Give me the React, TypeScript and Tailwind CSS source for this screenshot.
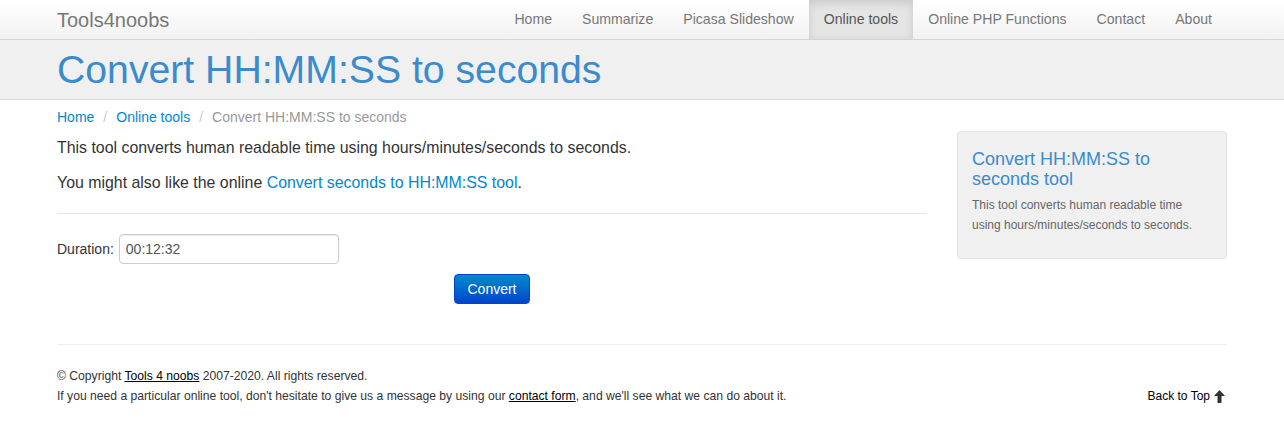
export default function App() {
  const navItems = ["Home", "Summarize", "Picasa Slideshow", "Online tools", "Online PHP Functions", "Contact", "About"];

  return (
    <div className="min-h-screen bg-white text-[#333] text-[14px]" style={{ fontFamily: '"Liberation Sans", Arial, sans-serif' }}>
      {/* Navbar */}
      <div className="h-[40px] bg-gradient-to-b from-white to-[#f2f2f2] border-b border-[#d4d4d4] shadow-[0_1px_4px_rgba(0,0,0,0.065)]">
        <div className="w-[1170px] mx-auto flex items-center justify-between h-full">
          <a className="text-[20px] text-[#777] leading-[20px]">Tools4noobs</a>
          <ul className="flex h-full text-[14.1px]">
            {navItems.map((item) => (
              <li
                key={item}
                className={
                  item === "Online tools"
                    ? "px-[15px] flex items-center h-full bg-[#e5e5e5] text-[#555] shadow-[inset_0_3px_8px_rgba(0,0,0,0.125)]"
                    : "px-[15px] flex items-center h-full text-[#777]"
                }
              >
                {item}
              </li>
            ))}
          </ul>
        </div>
      </div>

      {/* Page header */}
      <div className="h-[60px] bg-[#f0f0f0] border-b border-[#dcdcdc]">
        <div className="w-[1170px] mx-auto h-full flex items-center">
          <h1 className="text-[39.2px] leading-[40px] text-[#3a8bcd] pt-[1px]">Convert HH:MM:SS to seconds</h1>
        </div>
      </div>

      <div className="w-[1170px] mx-auto">
        {/* Breadcrumb */}
        <ul className="flex items-center pt-[7px] leading-[20px]">
          <li className="text-[#0088cc]">Home</li>
          <li className="px-[9px] text-[#ccc]">/</li>
          <li className="text-[#0088cc]">Online tools</li>
          <li className="px-[9px] text-[#ccc]">/</li>
          <li className="text-[#999]">Convert HH:MM:SS to seconds</li>
        </ul>

        <div className="flex gap-[30px] mt-[4px]">
          {/* Main */}
          <div className="w-[870px] pt-[4px]">
            <p className="text-[15.9px] leading-[25px] mb-[10px]">
              This tool converts human readable time using hours/minutes/seconds to seconds.
            </p>
            <p className="text-[15.9px] leading-[25px]">
              You might also like the online <a className="text-[#0088cc]">Convert seconds to HH:MM:SS tool</a>.
            </p>
            <hr className="mt-[18px] mb-[20px] border-0 border-t border-[#e5e5e5]" />
            <div className="flex items-center">
              <label className="mr-[5px]">Duration:</label>
              <input
                defaultValue="00:12:32"
                className="w-[220px] h-[30px] px-[6px] border border-[#ccc] rounded-[4px] text-[#555] text-[14px] shadow-[inset_0_1px_1px_rgba(0,0,0,0.075)] outline-none"
              />
            </div>
            <div className="flex justify-center mt-[10px]">
              <button className="h-[30px] px-[12px] rounded-[4px] text-white text-[14px] bg-gradient-to-b from-[#0088cc] to-[#0044cc] border border-[#0044cc]">
                Convert
              </button>
            </div>
          </div>

          {/* Sidebar */}
          <div className="w-[270px]">
            <div className="h-[128px] bg-[#f0f0f0] border border-[#e3e3e3] rounded-[4px] px-[14px] pt-[17px]">
              <h3 className="text-[18px] leading-[20px] text-[#3a8bcd]">Convert HH:MM:SS to seconds tool</h3>
              <p className="text-[12px] leading-[20px] text-[#666] mt-[6px]">
                This tool converts human readable time using hours/minutes/seconds to seconds.
              </p>
            </div>
          </div>
        </div>

        {/* Footer */}
        <hr className="mt-[40px] border-0 border-t border-[#eee]" />
        <div className="pt-[21px] pb-[20px] text-[12.15px] leading-[20px] text-[#333] flex justify-between items-end">
          <div>
            <p>
              © Copyright <a className="underline text-black">Tools 4 noobs</a> 2007-2020. All rights reserved.
            </p>
            <p>
              If you need a particular online tool, don't hesitate to give us a message by using our{" "}
              <a className="underline text-black">contact form</a>, and we'll see what we can do about it.
            </p>
          </div>
          <a className="flex items-center gap-[4px] text-black mr-[2px] text-[12px]">
            Back to Top
            <svg width="11" height="13" viewBox="0 0 11 13" fill="#333">
              <path d="M5.5 0 L11 6 L7.5 6 L7.5 13 L3.5 13 L3.5 6 L0 6 Z" />
            </svg>
          </a>
        </div>
      </div>
    </div>
  );
}
